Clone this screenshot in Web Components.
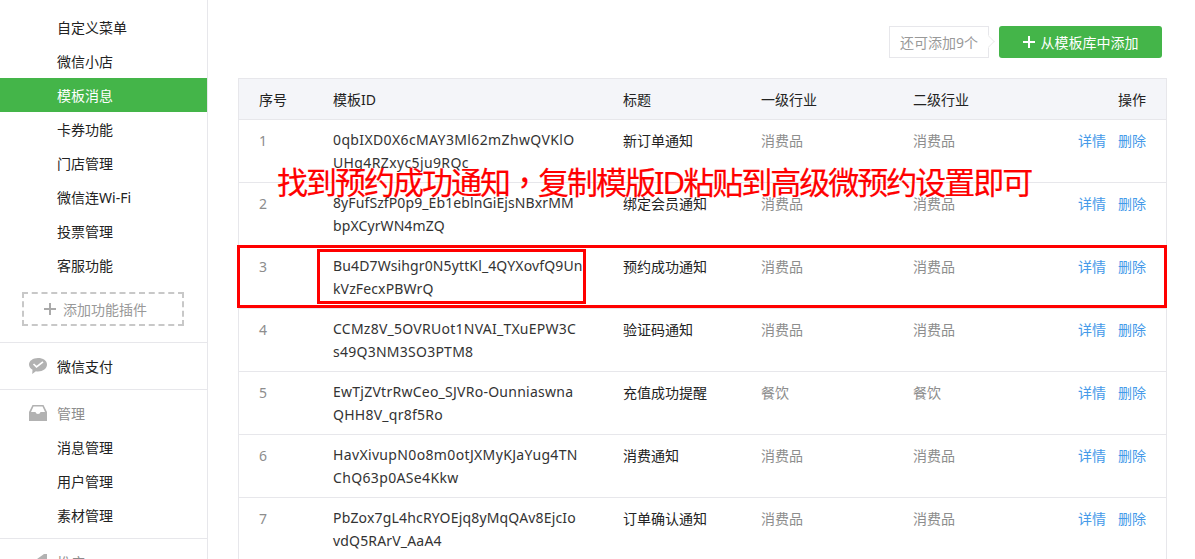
<!DOCTYPE html>
<html lang="zh">
<head>
<meta charset="utf-8">
<style>
  html, body { margin: 0; padding: 0; height: 559px; overflow: hidden; background: #fff; }
  body { font-family: "Noto Sans", "Noto Sans CJK SC", sans-serif; font-size: 14px; color: #222; }
  #page { display: flex; height: 559px; position: relative; overflow: hidden; }
</style>
</head>
<body>
<div id="page">
  <side-bar>
    <side-group class="first">
      <side-item>自定义菜单</side-item>
      <side-item>微信小店</side-item>
      <side-item active>模板消息</side-item>
      <side-item>卡券功能</side-item>
      <side-item>门店管理</side-item>
      <side-item>微信连Wi-Fi</side-item>
      <side-item>投票管理</side-item>
      <side-item>客服功能</side-item>
      <add-plugin>添加功能插件</add-plugin>
    </side-group>
    <side-group>
      <side-item icon="pay">微信支付</side-item>
    </side-group>
    <side-group>
      <side-item icon="box" head>管理</side-item>
      <side-item>消息管理</side-item>
      <side-item>用户管理</side-item>
      <side-item>素材管理</side-item>
    </side-group>
    <side-group>
      <side-item icon="horn" head>推广</side-item>
    </side-group>
  </side-bar>
  <main-panel>
    <tool-bar>
      <quota-tip>还可添加9个</quota-tip>
      <green-button>从模板库中添加</green-button>
    </tool-bar>
    <tpl-table>
      <tpl-row no="1" track=".37" a="0qbIXD0X6cMAY3Ml62mZhwQVKlO" b="UHg4RZxyc5ju9RQc" title="新订单通知" one="消费品" two="消费品"></tpl-row>
      <tpl-row no="2" track=".1" a="8yFufSzfP0p9_Eb1eblnGiEjsNBxrMM" b="bpXCyrWN4mZQ" title="绑定会员通知" one="消费品" two="消费品"></tpl-row>
      <tpl-row no="3" track=".13" a="Bu4D7Wsihgr0N5yttKl_4QYXovfQ9Un" b="kVzFecxPBWrQ" title="预约成功通知" one="消费品" two="消费品"></tpl-row>
      <tpl-row no="4" track=".25" a="CCMz8V_5OVRUot1NVAI_TXuEPW3C" b="s49Q3NM3SO3PTM8" title="验证码通知" one="消费品" two="消费品"></tpl-row>
      <tpl-row no="5" track=".25" a="EwTjZVtrRwCeo_SJVRo-Ounniaswna" b="QHH8V_qr8f5Ro" title="充值成功提醒" one="餐饮" two="餐饮"></tpl-row>
      <tpl-row no="6" track=".35" a="HavXivupN0o8m0otJXMyKJaYug4TN" b="ChQ63p0ASe4Kkw" title="消费通知" one="消费品" two="消费品"></tpl-row>
      <tpl-row no="7" track=".17" a="PbZox7gL4hcRYOEjq8yMqQAv8EjcIo" b="vdQ5RArV_AaA4" title="订单确认通知" one="消费品" two="消费品"></tpl-row>
    </tpl-table>
  </main-panel>
  <red-notes></red-notes>
</div>

<script>
const ICONS = {
  pay: `<svg width="18" height="16" viewBox="0 0 18 16"><path fill="#b2b2b2" d="M9 0C4 0 0 2.900 0 6.500c0 2.100 1.400 4 3.500 5.200L3.200 16l3.700-2.700c.7.100 1.400.2 2.100.2 5 0 9-3.100 9-7S14 0 9 0z"/><path fill="none" stroke="#fff" stroke-width="1.700" d="M4.500 6 7.500 8.800 14 3.800"/></svg>`,
  box: `<svg width="18" height="16" viewBox="0 0 18 16"><path fill="#b2b2b2" fill-rule="evenodd" d="M3.500 0h11L18 7v9H0V7zM4.500 1.500 2 7h4.500c.3 1.300 1.200 2 2.500 2s2.200-.7 2.500-2H16l-2.500-5.500z"/></svg>`,
  horn: `<svg width="18" height="16" viewBox="0 0 18 16"><path fill="#b2b2b2" d="M0 5h8l7-5h3v16h-3L8 11H0z"/></svg>`
};

class SideBar extends HTMLElement {
  constructor() {
    super();
    this.attachShadow({ mode: "open" });
    this.shadowRoot.innerHTML = `
      <style>
        :host { display: block; flex: none; width: 207px; height: 559px; border-right: 1px solid #e7e7eb; overflow: hidden; }
      </style>
      <slot></slot>`;
  }
}

class SideGroup extends HTMLElement {
  constructor() {
    super();
    this.attachShadow({ mode: "open" });
    this.shadowRoot.innerHTML = `
      <style>
        :host { display: block; padding: 6px 0; border-bottom: 1px solid #e7e7eb; }
        :host(.first) { padding: 10px 0 16px; }
        :host(:last-child) { border-bottom: 0; }
      </style>
      <slot></slot>`;
  }
}

class SideItem extends HTMLElement {
  constructor() {
    super();
    this.attachShadow({ mode: "open" });
  }
  connectedCallback() {
    const icon = this.getAttribute("icon");
    this.shadowRoot.innerHTML = `
      <style>
        :host { display: flex; align-items: center; height: 34px; padding-left: 57px; color: #222; font-size: 14px; position: relative; }
        :host([active]) { background: #44b549; color: #fff; }
        :host([head]) { color: #8d8d8d; }
        .ico { position: absolute; left: 29px; top: 9px; width: 18px; height: 16px; }
        svg { display: block; }
      </style>
      ${icon ? `<span class="ico">${ICONS[icon]}</span>` : ""}
      <slot></slot>`;
  }
}

class AddPlugin extends HTMLElement {
  constructor() {
    super();
    this.attachShadow({ mode: "open" });
    this.shadowRoot.innerHTML = `
      <style>
        :host { display: flex; align-items: center; gap: 7px; box-sizing: border-box; width: 162px; height: 34px; margin: 10px 0 0 22px; padding-left: 20px; border: 2px dashed #c8c8c8; color: #999; font-size: 14px; }
        svg { display: block; }
      </style>
      <svg width="12" height="12" viewBox="0 0 12 12"><path fill="#aaa" d="M5 0h2v5h5v2H7v5H5V7H0V5h5z"/></svg>
      <slot></slot>`;
  }
}

class MainPanel extends HTMLElement {
  constructor() {
    super();
    this.attachShadow({ mode: "open" });
    this.shadowRoot.innerHTML = `
      <style>
        :host { display: block; flex: 1; padding: 26px 28px 0 30px; min-width: 0; }
      </style>
      <slot></slot>`;
  }
}

class ToolBar extends HTMLElement {
  constructor() {
    super();
    this.attachShadow({ mode: "open" });
    this.shadowRoot.innerHTML = `
      <style>
        :host { display: flex; justify-content: flex-end; align-items: center; gap: 10px; height: 32px; margin: 0 5px 20px 0; }
      </style>
      <slot></slot>`;
  }
}

class QuotaTip extends HTMLElement {
  constructor() {
    super();
    this.attachShadow({ mode: "open" });
    this.shadowRoot.innerHTML = `
      <style>
        :host { display: flex; align-items: center; box-sizing: border-box; height: 32px; width: 100px; padding-left: 10px; border: 1px solid #e7e7eb; color: #999; font-size: 14px; position: relative; background: #fff; }
        i { position: absolute; right: -5px; top: 10px; width: 8px; height: 8px; background: #fff; border-top: 1px solid #eee; border-right: 1px solid #eee; transform: rotate(45deg); }
      </style>
      <slot></slot><i></i>`;
  }
}

class GreenButton extends HTMLElement {
  constructor() {
    super();
    this.attachShadow({ mode: "open" });
    this.shadowRoot.innerHTML = `
      <style>
        :host { display: flex; align-items: center; justify-content: center; gap: 6px; box-sizing: border-box; width: 163px; height: 32px; background: #44b549; border-radius: 3px; color: #fff; font-size: 14px; }
        svg { display: block; }
      </style>
      <svg width="12" height="12" viewBox="0 0 12 12"><path fill="#fff" d="M5 0h2v5h5v2H7v5H5V7H0V5h5z"/></svg>
      <slot></slot>`;
  }
}

const COLS = "74px 290px 138px 152px 1fr 68px";

class TplTable extends HTMLElement {
  constructor() {
    super();
    this.attachShadow({ mode: "open" });
    this.shadowRoot.innerHTML = `
      <style>
        :host { display: block; border: 1px solid #e7e7eb; border-bottom: 0; }
        .head { display: grid; grid-template-columns: ${COLS}; align-items: center; height: 40px; padding: 0 20px; background: #f4f5f9; border-bottom: 1px solid #e7e7eb; font-size: 14px; color: #222; }
        .head span:last-child { text-align: right; }
      </style>
      <div class="head"><span>序号</span><span>模板ID</span><span>标题</span><span>一级行业</span><span>二级行业</span><span>操作</span></div>
      <slot></slot>`;
  }
}

class TplRow extends HTMLElement {
  constructor() {
    super();
    this.attachShadow({ mode: "open" });
  }
  connectedCallback() {
    const g = (k) => this.getAttribute(k) || "";
    this.shadowRoot.innerHTML = `
      <style>
        :host { display: grid; grid-template-columns: ${COLS}; height: 62px; padding: 0 20px; border-bottom: 1px solid #e7e7eb; font-size: 14px; line-height: 22px; }
        .cell { padding-top: 10px; }
        .no, .ind { color: #8d8d8d; }
        .id { padding-top: 9px; color: #333; white-space: nowrap; letter-spacing: ${g("track")}px; }
        .id div + div { margin-top: 1px; }
        .act { display: flex; justify-content: space-between; color: #459ae9; }
      </style>
      <div class="cell no">${g("no")}</div>
      <div class="id"><div>${g("a")}</div><div>${g("b")}</div></div>
      <div class="cell">${g("title")}</div>
      <div class="cell ind">${g("one")}</div>
      <div class="cell ind">${g("two")}</div>
      <div class="cell act"><span>详情</span><span>删除</span></div>`;
  }
}

class RedNotes extends HTMLElement {
  constructor() {
    super();
    this.attachShadow({ mode: "open" });
    this.shadowRoot.innerHTML = `
      <style>
        :host { position: absolute; inset: 0; pointer-events: none; display: block; }
        .big { position: absolute; left: 277px; top: 160px; color: #f00; font-size: 31px; line-height: 42px; white-space: nowrap; letter-spacing: -2px; -webkit-text-stroke: .2px #f00; }
        .big span { font-family: "Noto Sans CJK TC", sans-serif; }
        .box1 { position: absolute; left: 237px; top: 245px; width: 930px; height: 63px; border: 3px solid #f00; box-sizing: border-box; }
        .box2 { position: absolute; left: 317px; top: 249px; width: 269px; height: 55px; border: 3px solid #f00; box-sizing: border-box; }
      </style>
      <div class="big">找到预约成功通知<span lang="zh-Hant">，</span>复制模版ID粘贴到高级微预约设置即可</div>
      <div class="box1"></div>
      <div class="box2"></div>`;
  }
}

customElements.define("side-bar", SideBar);
customElements.define("side-group", SideGroup);
customElements.define("side-item", SideItem);
customElements.define("add-plugin", AddPlugin);
customElements.define("main-panel", MainPanel);
customElements.define("tool-bar", ToolBar);
customElements.define("quota-tip", QuotaTip);
customElements.define("green-button", GreenButton);
customElements.define("tpl-table", TplTable);
customElements.define("tpl-row", TplRow);
customElements.define("red-notes", RedNotes);
</script>
</body>
</html>
